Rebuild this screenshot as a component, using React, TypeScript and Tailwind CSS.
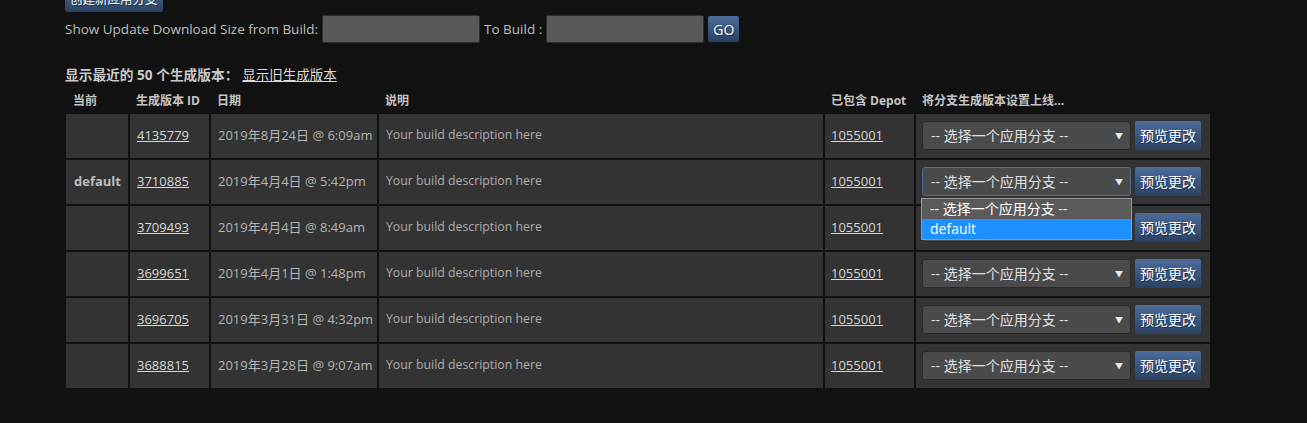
import { useState } from 'react';

const builds = [
  { current: '', id: '4135779', date: '2019年8月24日 @ 6:09am' },
  { current: 'default', id: '3710885', date: '2019年4月4日 @ 5:42pm', open: true },
  { current: '', id: '3709493', date: '2019年4月4日 @ 8:49am' },
  { current: '', id: '3699651', date: '2019年4月1日 @ 1:48pm' },
  { current: '', id: '3696705', date: '2019年3月31日 @ 4:32pm' },
  { current: '', id: '3688815', date: '2019年3月28日 @ 9:07am' },
];

const font = { fontFamily: '"Open Sans", "Noto Sans CJK SC", sans-serif' };

function BlueButton({ children, className = '' }: { children: React.ReactNode; className?: string }) {
  return (
    <button
      className={`block rounded-[2px] bg-gradient-to-b from-[#4d6d9c] to-[#2a4061] text-white [text-shadow:1px_1px_0_rgba(0,0,0,0.4)] ${className}`}
    >
      {children}
    </button>
  );
}

function BranchSelect({ open }: { open?: boolean }) {
  return (
    <div className="relative">
      <div
        className={`flex h-[29px] w-[209px] items-center justify-between rounded-[3px] border bg-[#4a4a4a] pl-[8px] pr-[7px] text-[14px] text-[#e0e0e0] ${
          open ? 'border-[#4a6fa0]' : 'border-[#2a2a2a]'
        }`}
      >
        <span>-- 选择一个应用分支 --</span>
        <span className="text-[8px] text-[#e8e8e8]">▼</span>
      </div>
      {open && (
        <div className="absolute left-[-1px] top-[31px] z-10 w-[211px] border border-[#9a9a9a] text-[14px] text-white">
          <div className="h-[20px] bg-[#5a5a5a] pl-[8px] leading-[20px]">-- 选择一个应用分支 --</div>
          <div className="h-[20px] bg-[#1e90ff] pl-[8px] leading-[20px]">default</div>
        </div>
      )}
    </div>
  );
}

export default function App() {
  const [from, setFrom] = useState('');
  const [to, setTo] = useState('');

  return (
    <div className="h-[423px] overflow-hidden bg-[#111111] pl-[65px] text-[#c8c8c8]" style={font}>
      <BlueButton className="-mt-[12px] h-[24px] px-[5px] text-[12.5px]">创建新应用分支</BlueButton>

      <div className="mt-[3px] flex items-center text-[13.5px] text-[#bdbdbd]">
        <span>Show Update Download Size from Build:</span>
        <input
          value={from}
          onChange={(e) => setFrom(e.target.value)}
          className="ml-[4px] h-[28px] w-[158px] rounded-[2px] border border-[#2e2e2e] bg-[#585858] outline-none"
        />
        <span className="ml-[4px]">To Build :</span>
        <input
          value={to}
          onChange={(e) => setTo(e.target.value)}
          className="ml-[4px] h-[28px] w-[158px] rounded-[2px] border border-[#2e2e2e] bg-[#585858] outline-none"
        />
        <BlueButton className="ml-[4px] h-[26px] px-[5px] text-[14px]">GO</BlueButton>
      </div>

      <div className="mt-[22px] flex items-center gap-[4px] text-[13.7px]">
        <span className="font-bold text-[#c8c8c8]">显示最近的 50 个生成版本：</span>
        <a className="text-[13.5px] text-[#d8d8d8] underline">显示旧生成版本</a>
      </div>

      <table className="-ml-[1px] mt-[2px] border-separate border-spacing-[2px] text-[12px]">
        <thead>
          <tr className="h-[22px] text-left font-bold text-[#c4c4c4]">
            <th className="w-[62px] pl-[7px]">当前</th>
            <th className="w-[79px] pl-[6px]">生成版本 ID</th>
            <th className="w-[166px] pl-[6px]">日期</th>
            <th className="w-[444px] pl-[6px]">说明</th>
            <th className="w-[89px] pl-[6px]">已包含 Depot</th>
            <th className="w-[294px] pl-[6px]">将分支生成版本设置上线...</th>
          </tr>
        </thead>
        <tbody>
          {builds.map((b) => (
            <tr key={b.id} className="h-[44px]">
              <td className="bg-[#333333] pl-[8px] text-[13px] font-bold text-[#bdbdbd]">{b.current}</td>
              <td className="bg-[#333333] pl-[7px] text-[13px]">
                <a className="text-[#d8d8d8] underline">{b.id}</a>
              </td>
              <td className="bg-[#333333] pl-[7px] text-[13px] text-[#b4b4b4]">{b.date}</td>
              <td className="bg-[#333333] pl-[7px] text-[12.3px] text-[#adadad]">Your build description here</td>
              <td className="bg-[#333333] pl-[6px] text-[13px]">
                <a className="text-[#d8d8d8] underline">1055001</a>
              </td>
              <td className="bg-[#333333] pl-[6px]">
                <div className="flex items-center gap-[4px]">
                  <BranchSelect open={b.open} />
                  <BlueButton className="h-[29px] px-[5px] text-[14px]">预览更改</BlueButton>
                </div>
              </td>
            </tr>
          ))}
        </tbody>
      </table>
    </div>
  );
}
